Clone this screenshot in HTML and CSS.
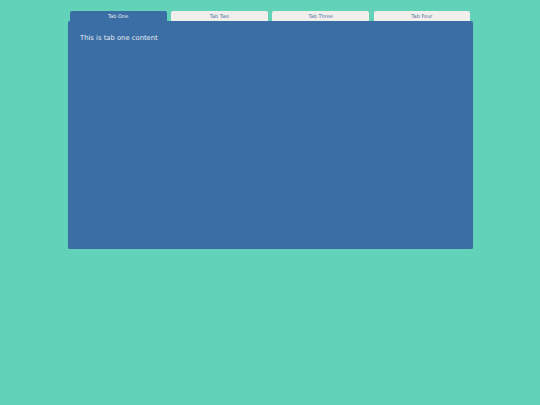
FILE: index.html
```html
<!DOCTYPE html>
<html>
<head>
<meta charset="utf-8">
<link rel="stylesheet" href="styles.css">
</head>
<body>
<div class="tabs">
  <div class="tab-list">
    <div class="tab active">Tab One</div>
    <div class="tab">Tab Two</div>
    <div class="tab">Tab Three</div>
    <div class="tab">Tab Four</div>
  </div>
  <div class="panel">
    <p class="content">This is tab one content</p>
  </div>
</div>
</body>
</html>
```
FILE: styles.css
```css
html, body {
  margin: 0;
  padding: 0;
  background: #62d3b9;
  font-family: "DejaVu Sans", sans-serif;
}
.tabs {
  width: 405px;
  margin: 0 auto;
  padding-top: 10.5px;
}
.tab-list {
  display: flex;
  height: 10.5px;
}
.tab {
  flex: 1;
  margin: 0 2.25px;
  background: #f1efec;
  color: #4a6f98;
  font-size: 5px;
  line-height: 10.5px;
  text-align: center;
  border-radius: 2px 2px 0 0;
}
.tab.active {
  background: #3a6ea5;
  color: #f4f4f4;
}
.panel {
  height: 228px;
  background: #3a6ea5;
  border-radius: 2px;
  box-sizing: border-box;
  padding: 13px 12.5px;
  box-shadow: 0 0.5px 1px rgba(0,0,0,0.2);
}
.content {
  margin: 0;
  font-size: 6.8px;
  line-height: 8px;
  color: #e6ecf3;
}
```
